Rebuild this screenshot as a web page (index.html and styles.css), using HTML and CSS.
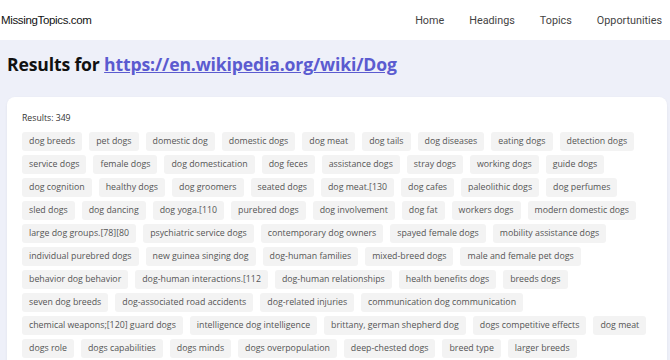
FILE: index.html
```html
<!DOCTYPE html>
<html lang="en">
<head>
  <meta charset="UTF-8">
  <meta name="viewport" content="width=device-width, initial-scale=1.0">
  <link rel="stylesheet" href="styles.css">
</head>
<body>

<!-- top bar -->
<header class="topbar">
  <div class="brand">MissingTopics.com</div>
  <nav class="nav">
    <a href="#">Home</a>
    <a href="#">Headings</a>
    <a href="#">Topics</a>
    <a href="#">Opportunities</a>
  </nav>
</header>

<main class="page">
  <h1 class="title">Results for <a href="#">https://en.wikipedia.org/wiki/Dog</a></h1>

  <section class="card">
    <div class="count">Results: 349</div>
    <div class="tags" id="tags"></div>
  </section>
</main>

<script>
  // topic list
  const topics = [
    'dog breeds', 'pet dogs', 'domestic dog', 'domestic dogs', 'dog meat', 'dog tails', 'dog diseases', 'eating dogs', 'detection dogs',
    'service dogs', 'female dogs', 'dog domestication', 'dog feces', 'assistance dogs', 'stray dogs', 'working dogs', 'guide dogs',
    'dog cognition', 'healthy dogs', 'dog groomers', 'seated dogs', 'dog meat.[130', 'dog cafes', 'paleolithic dogs', 'dog perfumes',
    'sled dogs', 'dog dancing', 'dog yoga.[110', 'purebred dogs', 'dog involvement', 'dog fat', 'workers dogs', 'modern domestic dogs',
    'large dog groups.[78][80', 'psychiatric service dogs', 'contemporary dog owners', 'spayed female dogs', 'mobility assistance dogs',
    'individual purebred dogs', 'new guinea singing dog', 'dog-human families', 'mixed-breed dogs', 'male and female pet dogs',
    'behavior dog behavior', 'dog-human interactions.[112', 'dog-human relationships', 'health benefits dogs', 'breeds dogs',
    'seven dog breeds', 'dog-associated road accidents', 'dog-related injuries', 'communication dog communication',
    'chemical weapons;[120] guard dogs', 'intelligence dog intelligence', 'brittany, german shepherd dog', 'dogs competitive effects', 'dog meat',
    'dogs role', 'dogs capabilities', 'dogs minds', 'dogs overpopulation', 'deep-chested dogs', 'breed type', 'larger breeds'
  ];

  const tagsBox = document.getElementById('tags');
  topics.forEach(t => {
    const span = document.createElement('span');
    span.className = 'tag';
    span.textContent = t;
    tagsBox.appendChild(span);
  });
</script>

</body>
</html>
```

FILE: styles.css
```css
body {
  margin: 0;
  background: #eef0f9;
  font-family: "Open Sans", "Noto Sans", sans-serif;
  color: #222;
}

.topbar {
  height: 40px;
  background: #fff;
  display: flex;
  align-items: center;
  justify-content: space-between;
  padding: 0 8px 0 1px;
}

.brand {
  font-family: "Liberation Sans", Arial, sans-serif;
  font-size: 11.5px;
  letter-spacing: -0.35px;
  color: #111;
}

.nav {
  display: flex;
  gap: 25px;
}

.nav a {
  font-family: Roboto, sans-serif;
  font-size: 10.8px;
  color: #444;
  text-decoration: none;
}

.page {
  padding: 12px 3px 0 7px;
}

.title {
  margin: 0 0 21px;
  font-size: 17.6px;
  line-height: 24px;
  font-weight: 700;
  color: #111;
  letter-spacing: -0.15px;
}

.title a {
  color: #5b5bd0;
}

.card {
  background: #fff;
  border-radius: 8px;
  box-shadow: 0 1px 3px rgba(0,0,0,0.06);
  padding: 15px 15px 20px;
}

.count {
  font-size: 8.7px;
  line-height: 12px;
  color: #333;
  margin-bottom: 8px;
}

.tags {
  display: flex;
  flex-wrap: wrap;
  gap: 4px 7px;
}

.tag {
  background: #f3f3f3;
  color: #555;
  font-size: 8.8px;
  line-height: 19px;
  padding: 0 7px;
  border-radius: 3px;
}
```
